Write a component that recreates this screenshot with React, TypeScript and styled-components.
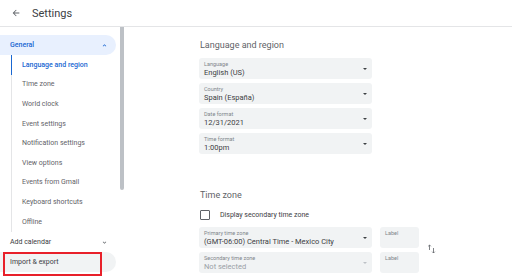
import React from "react";
import styled, { createGlobalStyle } from "styled-components";

const GlobalStyle = createGlobalStyle`
  html, body {
    margin: 0;
    padding: 0;
    background: #fff;
    font-family: Roboto, "Liberation Sans", sans-serif;
    overflow: hidden;
  }
`;

const Page = styled.div`
  width: 512px;
  height: 278px;
  display: flex;
  flex-direction: column;
  overflow: hidden;
`;

const Header = styled.div`
  height: 27px;
  flex-shrink: 0;
  display: flex;
  align-items: center;
  border-bottom: 1px solid #e4e5e7;
  box-sizing: border-box;
  padding-left: 11px;
  gap: 11px;
`;

const Title = styled.span`
  font-size: 11px;
  color: #3c4043;
`;

const Body = styled.div`
  flex: 1;
  display: flex;
  min-height: 0;
`;

const Sidebar = styled.div`
  width: 126px;
  flex-shrink: 0;
  position: relative;
  padding-top: 8px;
`;

const Scrollbar = styled.div`
  position: absolute;
  left: 120px;
  top: 0;
  width: 4px;
  height: 163px;
  background: #bdc1c6;
  border-radius: 0 0 2px 2px;
`;

const Group = styled.div<{ $active?: boolean; $framed?: boolean }>`
  width: 116px;
  height: 20px;
  box-sizing: border-box;
  display: flex;
  align-items: center;
  justify-content: space-between;
  padding: 0 8px 0 10px;
  border-radius: 0 10px 10px 0;
  font-size: 7px;
  background: ${(p) => (p.$active ? "#e8f0fe" : p.$framed ? "#f1f3f4" : "transparent")};
  color: ${(p) => (p.$active ? "#1967d2" : "#3c4043")};
  font-weight: ${(p) => (p.$active ? 500 : 400)};
  position: relative;
`;

const Frame = styled.div`
  position: absolute;
  left: 3px;
  top: 0;
  width: 99px;
  height: 24px;
  border: 2px solid #e8202a;
  box-sizing: border-box;
`;

const SubList = styled.div`
  margin-left: 11px;
  border-left: 1px solid #e4e5e7;
  padding: 0 0 1px;
`;

const SubItem = styled.div<{ $active?: boolean }>`
  height: 19.6px;
  display: flex;
  align-items: center;
  padding-left: 10px;
  font-size: 7px;
  margin-left: -1px;
  border-left: 1px solid ${(p) => (p.$active ? "#1967d2" : "transparent")};
  color: ${(p) => (p.$active ? "#1967d2" : "#5f6368")};
  font-weight: ${(p) => (p.$active ? 500 : 400)};
`;

const Main = styled.div`
  padding: 11px 0 0 73px;
  display: flex;
  flex-direction: column;
`;

const Heading = styled.div<{ $gap: number }>`
  font-size: 9px;
  color: #5f6368;
  height: 14px;
  line-height: 14px;
  margin-left: 1px;
  margin-bottom: ${(p) => p.$gap}px;
`;

const Fields = styled.div`
  display: flex;
  flex-direction: column;
  gap: 4px;
`;

const Select = styled.div<{ $disabled?: boolean }>`
  width: 173px;
  height: 21px;
  box-sizing: border-box;
  background: #f1f3f4;
  border-radius: 3px;
  padding: 3px 5px 0;
  display: flex;
  justify-content: space-between;
  align-items: center;
  color: ${(p) => (p.$disabled ? "#9aa0a6" : "#3c4043")};
`;

const SelectText = styled.div`
  display: flex;
  flex-direction: column;
  line-height: 1;
`;

const SmallLabel = styled.span`
  font-size: 5.5px;
  color: #80868b;
  margin-bottom: 2px;
  margin-top: -2px;
`;

const Value = styled.span`
  font-size: 7.5px;
`;

const Caret = styled.span<{ $disabled?: boolean }>`
  width: 0;
  height: 0;
  border-left: 2px solid transparent;
  border-right: 2px solid transparent;
  border-top: 2px solid ${(p) => (p.$disabled ? "#bdc1c6" : "#3c4043")};
  margin-top: -2px;
`;

const CheckRow = styled.label`
  display: flex;
  align-items: center;
  gap: 10px;
  font-size: 7px;
  color: #3c4043;
  margin: 0 0 7px 1px;
`;

const Box = styled.span`
  width: 8px;
  height: 8px;
  border: 1px solid #5f6368;
  border-radius: 1px;
`;

const TzRow = styled.div`
  display: flex;
  align-items: center;
  gap: 8px;
`;

const LabelBox = styled.div`
  width: 39px;
  height: 21px;
  box-sizing: border-box;
  background: #f1f3f4;
  border-radius: 3px;
  padding: 3px 5px;
  font-size: 5.5px;
  color: #80868b;
`;

const Swap = styled.div`
  margin-left: 0;
  margin-top: -2px;
  display: flex;
  align-items: center;
`;

const Back = () => (
  <svg width="10" height="10" viewBox="0 0 24 24">
    <path d="M20 11H7.83l5.59-5.59L12 4l-8 8 8 8 1.41-1.41L7.83 13H20v-2z" fill="#5f6368" />
  </svg>
);

const Chevron = ({ up }: { up?: boolean }) => (
  <svg width="7" height="7" viewBox="0 0 24 24">
    <path
      d={up ? "M7.41 15.41L12 10.83l4.59 4.58L18 14l-6-6-6 6z" : "M7.41 8.59L12 13.17l4.59-4.58L18 10l-6 6-6-6z"}
      fill={up ? "#1967d2" : "#5f6368"}
    />
  </svg>
);

const subItems = [
  "Language and region",
  "Time zone",
  "World clock",
  "Event settings",
  "Notification settings",
  "View options",
  "Events from Gmail",
  "Keyboard shortcuts",
  "Offline",
];

const regionFields = [
  { label: "Language", value: "English (US)" },
  { label: "Country", value: "Spain (España)" },
  { label: "Date format", value: "12/31/2021" },
  { label: "Time format", value: "1:00pm" },
];

export default function App() {
  return (
    <Page>
      <GlobalStyle />
      <Header>
        <Back />
        <Title>Settings</Title>
      </Header>
      <Body>
        <Sidebar>
          <Scrollbar />
          <Group $active>
            General
            <Chevron up />
          </Group>
          <SubList>
            {subItems.map((s, i) => (
              <SubItem key={s} $active={i === 0}>
                {s}
              </SubItem>
            ))}
          </SubList>
          <Group>
            Add calendar
            <Chevron />
          </Group>
          <Group $framed>
            Import &amp; export
            <Frame />
          </Group>
        </Sidebar>
        <Main>
          <Heading $gap={6}>Language and region</Heading>
          <Fields>
            {regionFields.map((f) => (
              <Select key={f.label}>
                <SelectText>
                  <SmallLabel>{f.label}</SmallLabel>
                  <Value>{f.value}</Value>
                </SelectText>
                <Caret />
              </Select>
            ))}
          </Fields>
          <div style={{ height: 34 }} />
          <Heading $gap={8}>Time zone</Heading>
          <CheckRow>
            <Box />
            Display secondary time zone
          </CheckRow>
          <TzRow>
            <Fields>
              <TzRow>
                <Select>
                  <SelectText>
                    <SmallLabel>Primary time zone</SmallLabel>
                    <Value>(GMT-06:00) Central Time - Mexico City</Value>
                  </SelectText>
                  <Caret />
                </Select>
                <LabelBox>Label</LabelBox>
              </TzRow>
              <TzRow>
                <Select $disabled>
                  <SelectText>
                    <SmallLabel>Secondary time zone</SmallLabel>
                    <Value>Not selected</Value>
                  </SelectText>
                  <Caret $disabled />
                </Select>
                <LabelBox>Label</LabelBox>
              </TzRow>
            </Fields>
            <Swap>
              <svg width="9" height="10" viewBox="0 0 9 10">
                <path d="M2.5 1v5M1.2 2.3l1.3-1.3 1.3 1.3" stroke="#5f6368" strokeWidth="0.8" fill="none" />
                <path d="M6.5 9V4M5.2 7.7l1.3 1.3 1.3-1.3" stroke="#5f6368" strokeWidth="0.8" fill="none" />
              </svg>
            </Swap>
          </TzRow>
        </Main>
      </Body>
    </Page>
  );
}
